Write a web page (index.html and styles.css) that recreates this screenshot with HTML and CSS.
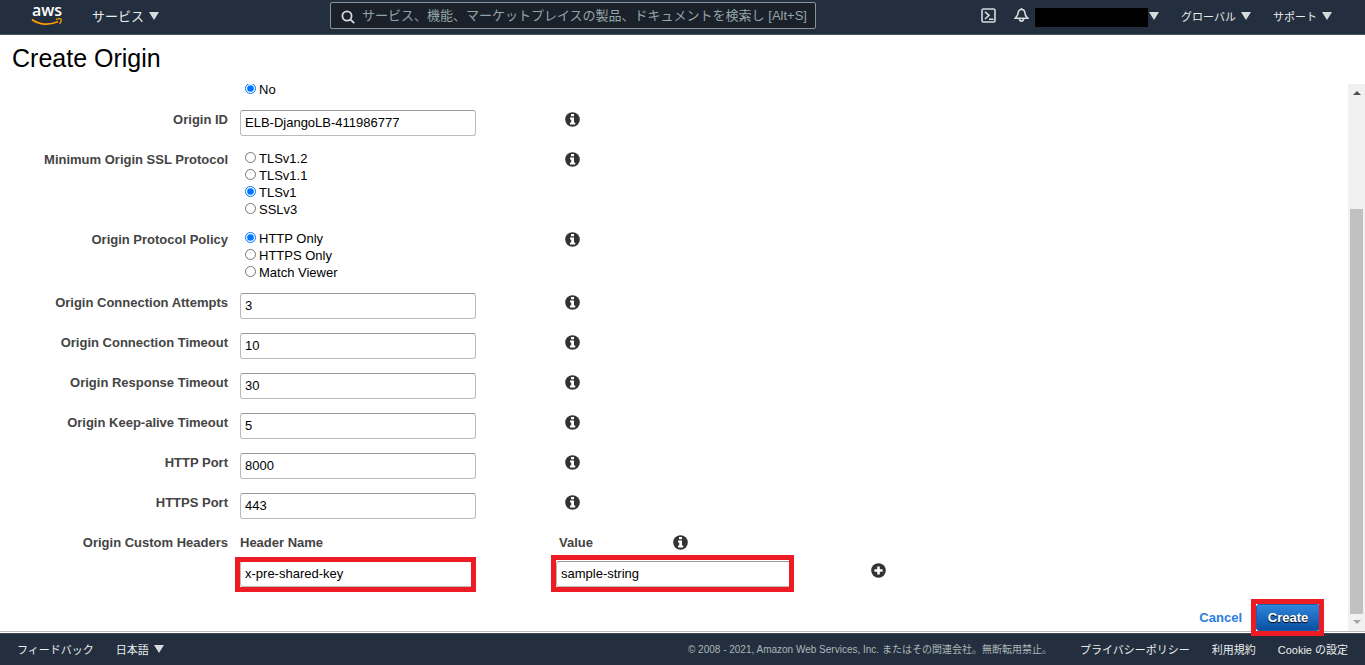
FILE: index.html
```html
<!DOCTYPE html>
<html lang="ja">

<head>
  <meta charset="utf-8">
  <title>Create Origin</title>
  <link rel="stylesheet" href="styles.css">
</head>

<body>
  <svg class="sprite" aria-hidden="true">
    <symbol id="info" viewBox="0 0 15 15">
      <circle cx="7.5" cy="7.5" r="7.3" fill="#333" />
      <path d="M6 2h3v2.2H6zM5 5.4h4v5.2h1.2v2H5v-2h1.2V7.4H5z" fill="#fff" />
    </symbol>
    <symbol id="plus" viewBox="0 0 15 15">
      <circle cx="7.5" cy="7.5" r="7.3" fill="#333" />
      <path d="M6.2 3.4h2.6v2.8h2.8v2.6H8.8v2.8H6.2V8.8H3.4V6.2h2.8z" fill="#fff" />
    </symbol>
  </svg>

  <header class="topbar">
    <div class="topbar-left">
      <a class="logo" href="#" aria-label="aws">
        <svg width="32" height="28" viewBox="0 0 32 28">
          <text x="16" y="14" class="logo-text">aws</text>
          <path d="M1 17.500C8 23 19 23.500 27 19.500" fill="none" stroke="#f90" stroke-width="1.800" />
          <path d="M25 17.400c2.200-.8 4.600-1 5.100-.4s-.1 3.100-1.600 4.800" fill="none" stroke="#f90" stroke-width="1.300" />
        </svg>
      </a>
      <button class="menu menu-services">サービス<span class="caret"></span></button>
    </div>
    <div class="search">
      <svg width="14" height="14" viewBox="0 0 14 14" fill="none" stroke="#d5dbdb" stroke-width="1.800">
        <circle cx="6" cy="6" r="4.600" />
        <path d="M9.300 9.300l3.900 3.900" />
      </svg>
      <input type="text" aria-label="検索" placeholder="サービス、機能、マーケットプレイスの製品、ドキュメントを検索し">
      <span class="shortcut">[Alt+S]</span>
    </div>
    <div class="topbar-right">
      <button class="icon-btn" aria-label="CloudShell">
        <svg width="15" height="15" viewBox="0 0 15 15" fill="none" stroke="#d5dbdb" stroke-width="1.600">
          <rect x="1" y="1" width="13" height="13" rx="1.500" />
          <path d="M4 3.800l4 3.500-4 3.700M8 11.300h4.500" />
        </svg>
      </button>
      <button class="icon-btn bell" aria-label="通知">
        <svg width="15" height="15" viewBox="0 0 15 15" fill="none" stroke="#d5dbdb" stroke-width="1.600">
          <path d="M7.500 1.500C5.200 1.500 4.200 3 4.200 4.800c0 2.400-1 3.400-3 5.400h12.600c-2-2-3-3-3-5.400 0-1.800-1-3.300-3.300-3.300z" />
          <path d="M5.400 10.500a2.100 2.600 0 0 0 4.200 0" />
          <path d="M7.500 0v1.500" />
        </svg>
      </button>
      <button class="menu account" aria-label="アカウント"><span class="account-name"></span><span class="caret"></span></button>
      <button class="menu">グローバル<span class="caret"></span></button>
      <button class="menu">サポート<span class="caret"></span></button>
    </div>
  </header>

  <h1>Create Origin</h1>

  <main class="panel">
    <form class="panel-body">
      <div class="fields">
        <div class="row">
          <div class="control radios">
            <label><input type="radio" name="shield" checked>No</label>
          </div>
        </div>
        <div class="row">
          <label class="name" for="origin-id">Origin ID</label>
          <div class="control"><input class="text" type="text" id="origin-id" value="ELB-DjangoLB-411986777"></div>
          <button type="button" class="info" aria-label="Info"><svg><use href="#info" /></svg></button>
        </div>
        <div class="row">
          <span class="name" id="ssl-label">Minimum Origin SSL Protocol</span>
          <div class="control radios" role="radiogroup" aria-labelledby="ssl-label">
            <label><input type="radio" name="ssl">TLSv1.2</label>
            <label><input type="radio" name="ssl">TLSv1.1</label>
            <label><input type="radio" name="ssl" checked>TLSv1</label>
            <label><input type="radio" name="ssl">SSLv3</label>
          </div>
          <button type="button" class="info" aria-label="Info"><svg><use href="#info" /></svg></button>
        </div>
        <div class="row">
          <span class="name" id="policy-label">Origin Protocol Policy</span>
          <div class="control radios" role="radiogroup" aria-labelledby="policy-label">
            <label><input type="radio" name="policy" checked>HTTP Only</label>
            <label><input type="radio" name="policy">HTTPS Only</label>
            <label><input type="radio" name="policy">Match Viewer</label>
          </div>
          <button type="button" class="info" aria-label="Info"><svg><use href="#info" /></svg></button>
        </div>
        <div class="row">
          <label class="name" for="attempts">Origin Connection Attempts</label>
          <div class="control"><input class="text" type="text" id="attempts" value="3"></div>
          <button type="button" class="info" aria-label="Info"><svg><use href="#info" /></svg></button>
        </div>
        <div class="row">
          <label class="name" for="conn-timeout">Origin Connection Timeout</label>
          <div class="control"><input class="text" type="text" id="conn-timeout" value="10"></div>
          <button type="button" class="info" aria-label="Info"><svg><use href="#info" /></svg></button>
        </div>
        <div class="row">
          <label class="name" for="resp-timeout">Origin Response Timeout</label>
          <div class="control"><input class="text" type="text" id="resp-timeout" value="30"></div>
          <button type="button" class="info" aria-label="Info"><svg><use href="#info" /></svg></button>
        </div>
        <div class="row">
          <label class="name" for="keepalive">Origin Keep-alive Timeout</label>
          <div class="control"><input class="text" type="text" id="keepalive" value="5"></div>
          <button type="button" class="info" aria-label="Info"><svg><use href="#info" /></svg></button>
        </div>
        <div class="row">
          <label class="name" for="http-port">HTTP Port</label>
          <div class="control"><input class="text" type="text" id="http-port" value="8000"></div>
          <button type="button" class="info" aria-label="Info"><svg><use href="#info" /></svg></button>
        </div>
        <div class="row">
          <label class="name" for="https-port">HTTPS Port</label>
          <div class="control"><input class="text" type="text" id="https-port" value="443"></div>
          <button type="button" class="info" aria-label="Info"><svg><use href="#info" /></svg></button>
        </div>
        <div class="row">
          <span class="name">Origin Custom Headers</span>
          <div class="headers">
            <label class="head" for="header-name">Header Name</label>
            <div class="head head-value">
              <label for="header-value">Value</label>
              <button type="button" class="info" aria-label="Info"><svg><use href="#info" /></svg></button>
            </div>
            <div class="mark"><input class="text" type="text" id="header-name" value="x-pre-shared-key"></div>
            <div class="mark mark-value"><input class="text" type="text" id="header-value" value="sample-string"></div>
            <button type="button" class="info" aria-label="Add header"><svg><use href="#plus" /></svg></button>
          </div>
        </div>
      </div>
      <div class="actions">
        <a class="cancel" href="#">Cancel</a>
        <div class="mark mark-create"><button type="submit" class="create">Create</button></div>
      </div>
    </form>
    <div class="scrollbar" aria-hidden="true">
      <span class="arrow arrow-up"></span>
      <span class="track"><span class="thumb"></span></span>
      <span class="arrow arrow-down"></span>
    </div>
  </main>

  <footer class="footer">
    <a href="#">フィードバック</a>
    <button class="menu">日本語<span class="caret"></span></button>
    <span class="copyright">© 2008 - 2021, Amazon Web Services, Inc. またはその関連会社。無断転用禁止。</span>
    <a href="#">プライバシーポリシー</a>
    <a href="#">利用規約</a>
    <a href="#">Cookie の設定</a>
  </footer>
</body>

</html>
```
FILE: styles.css
```css
* {
  box-sizing: border-box;
}

body {
  margin: 0;
  height: 100vh;
  display: flex;
  flex-direction: column;
  overflow: hidden;
  background: #fff;
  color: #000;
  font-family: "Liberation Sans", "Noto Sans CJK JP", sans-serif;
  font-size: 13px;
}

button,
input {
  font: inherit;
}

button {
  padding: 0;
  border: 0;
  background: none;
  cursor: pointer;
}

a {
  text-decoration: none;
}

.sprite {
  position: absolute;
  width: 0;
  height: 0;
}

/* top navigation */
.topbar {
  display: grid;
  grid-template-columns: 330px minmax(300px, 486px) 1fr;
  flex: none;
  height: 35px;
  padding-bottom: 3px;
  background: #232f3e;
  border-bottom: 1px solid #4a5362;
}

.topbar-left,
.topbar-right {
  display: flex;
  align-items: center;
}

.topbar-left {
  padding-left: 31px;
  gap: 29px;
}

.logo svg {
  display: block;
  overflow: visible;
}

.logo-text {
  fill: #fff;
  font-family: "Open Sans", sans-serif;
  font-size: 16px;
  font-weight: 600;
  text-anchor: middle;
}

.menu {
  display: flex;
  align-items: center;
  gap: 5px;
  color: #eaeded;
  font-size: 11px;
  white-space: nowrap;
}

.menu-services {
  font-size: 13px;
}

.caret {
  border: 5px solid transparent;
  border-top: 8px solid #d5dbdb;
  border-bottom: 0;
}

.search {
  display: flex;
  align-items: center;
  height: 27px;
  margin-top: 2px;
  padding: 0 8px 0 10px;
  background: #1a212b;
  border: 1px solid #879596;
  border-radius: 2px;
}

.search svg {
  flex: none;
  margin-top: 3px;
}

.search input {
  flex: 1;
  min-width: 0;
  height: 25px;
  margin-left: 7px;
  padding: 0;
  border: 0;
  outline: 0;
  background: none;
  color: #fff;
}

.search input::placeholder {
  color: #95a5a6;
  opacity: 1;
}

.shortcut {
  margin-left: 3px;
  color: #95a5a6;
}

.topbar-right {
  justify-content: flex-end;
  gap: 22px;
  padding-right: 33px;
}

.icon-btn svg {
  display: block;
}

.icon-btn {
  margin-right: -4px;
}

.bell {
  margin-right: -16px;
}

.account {
  gap: 1px;
}

.account-name {
  width: 113px;
  height: 19px;
  margin-top: 4px;
  background: #000;
}

h1 {
  flex: none;
  height: 49px;
  margin: 0;
  padding-left: 12px;
  font-size: 25px;
  font-weight: normal;
  line-height: 47px;
}

/* form */
.panel {
  display: flex;
  flex: 1;
  min-height: 0;
  border-bottom: 1px solid #bbb;
}

.panel-body {
  display: flex;
  flex: 1;
  flex-direction: column;
  min-width: 0;
}

/* the list is scrolled down to its last row */
.fields {
  display: flex;
  flex: 1;
  flex-direction: column;
  justify-content: flex-end;
  min-height: 0;
  padding-bottom: 4px;
  overflow: hidden;
}

.row {
  display: grid;
  flex: none;
  grid-template-columns: 228px 313px 1fr;
  column-gap: 12px;
  align-items: start;
  padding-bottom: 13px;
}

.name,
.head {
  color: #444;
  font-weight: bold;
  line-height: 20px;
}

.name {
  text-align: right;
}

.control {
  grid-column: 2;
  padding-bottom: 1px;
}

.text {
  display: block;
  width: 236px;
  height: 26px;
  padding: 0 4px 1px;
  border: 1px solid #bbb;
  border-top-color: #999;
  border-radius: 3px;
  background: #fff;
  color: #000;
}

.radios {
  margin-bottom: -2px;
}

.radios label {
  display: flex;
  align-items: center;
  line-height: 17px;
}

.radios input {
  width: 11px;
  height: 11px;
  margin: 0 3px 2px 5px;
  accent-color: #0075ff;
}

.info {
  justify-self: start;
  height: 18px;
}

.info svg {
  display: block;
  width: 15px;
  height: 15px;
}

.headers {
  display: grid;
  grid-column: 2 / 4;
  grid-template-columns: 316px 315px 1fr;
  row-gap: 8px;
}

.head-value {
  display: flex;
  grid-column: 2 / 4;
  padding-left: 3px;
}

.head-value label {
  width: 114px;
}

/* red frame around the fields to fill in */
.mark {
  position: relative;
  justify-self: start;
}

.mark::after {
  content: "";
  position: absolute;
  inset: -4px 0 -5px -5px;
  border: 5px solid #ed1c24;
  pointer-events: none;
}

.mark-value::after {
  inset: -6px -2px -5px -5px;
}

.mark-create::after {
  inset: -5px -4px -5px -5px;
}

.actions {
  display: flex;
  flex: none;
  align-items: center;
  justify-content: flex-end;
  gap: 14px;
  padding-right: 28px;
}

.cancel {
  color: #2a7de1;
  font-weight: bold;
}

.create {
  display: block;
  width: 64px;
  height: 27px;
  border: 1px solid #1c5fa8;
  border-radius: 3px;
  background: linear-gradient(#2f86dc, #0a50a1);
  color: #fff;
  font-weight: bold;
  text-shadow: 0 1px 1px #000;
}

.scrollbar {
  display: flex;
  flex-direction: column;
  align-items: center;
  width: 17px;
  padding: 7px 0;
  background: #f1f1f1;
}

.arrow {
  border: 4px solid transparent;
}

.arrow-up {
  border-top: 0;
  border-bottom-color: #505050;
}

.arrow-down {
  border-bottom: 0;
  border-top-color: #a3a3a3;
}

.track {
  display: flex;
  flex: 1;
  align-items: flex-end;
  margin: 6px 0;
}

.thumb {
  width: 13px;
  height: 79%;
  background: #c1c1c1;
}

.footer {
  display: flex;
  flex: none;
  align-items: center;
  gap: 22px;
  height: 32px;
  margin-top: 1px;
  padding: 0 17px 2px;
  background: #232f3e;
  border-top: 1px solid #3d4654;
  font-size: 11px;
  white-space: nowrap;
}

.footer a {
  color: #eaeded;
}

.copyright {
  margin: 0 6px 0 auto;
  color: #aab7b8;
  font-size: 10px;
}
```
